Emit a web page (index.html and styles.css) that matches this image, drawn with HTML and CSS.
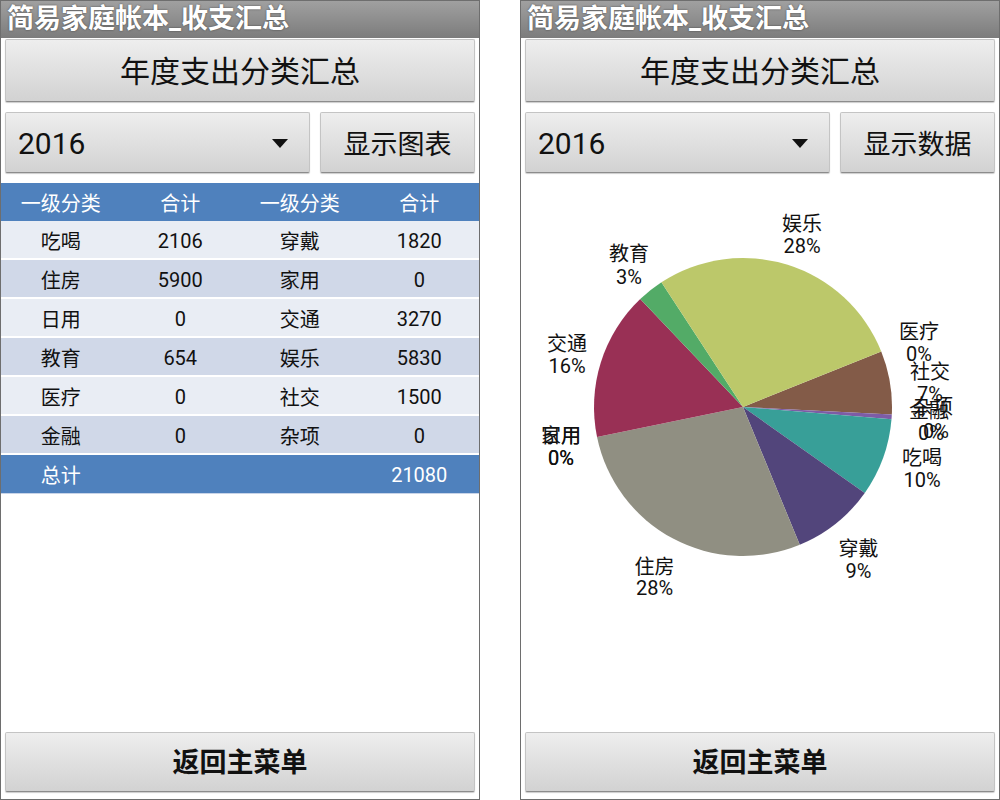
FILE: index.html
```html
<!DOCTYPE html>
<html lang="zh-CN">
<head>
<meta charset="utf-8">
<title>简易家庭帐本_收支汇总</title>
<link rel="stylesheet" href="styles.css">
</head>
<body>
<div class="page">
  <div class="screen">
    <div class="titlebar">简易家庭帐本_收支汇总</div>
    <div class="btn btn-wide">年度支出分类汇总</div>
    <div class="row2">
      <div class="btn spinner"><span>2016</span><span class="arrow"></span></div>
      <div class="btn btn-small">显示图表</div>
    </div>
    <div class="table">
      <div class="tr head"><span>一级分类</span><span>合计</span><span>一级分类</span><span>合计</span></div>
      <div class="tr light"><span>吃喝</span><span>2106</span><span>穿戴</span><span>1820</span></div>
      <div class="tr dark"><span>住房</span><span>5900</span><span>家用</span><span>0</span></div>
      <div class="tr light"><span>日用</span><span>0</span><span>交通</span><span>3270</span></div>
      <div class="tr dark"><span>教育</span><span>654</span><span>娱乐</span><span>5830</span></div>
      <div class="tr light"><span>医疗</span><span>0</span><span>社交</span><span>1500</span></div>
      <div class="tr dark"><span>金融</span><span>0</span><span>杂项</span><span>0</span></div>
      <div class="tr total"><span>总计</span><span></span><span></span><span>21080</span></div>
    </div>
    <div class="btn btn-bottom">返回主菜单</div>
  </div>

  <div class="screen">
    <div class="titlebar">简易家庭帐本_收支汇总</div>
    <div class="btn btn-wide">年度支出分类汇总</div>
    <div class="row2">
      <div class="btn spinner"><span>2016</span><span class="arrow"></span></div>
      <div class="btn btn-small">显示数据</div>
    </div>
    <div class="chart">
      <svg class="pie" width="478" height="558" viewBox="0 0 478 558" xmlns="http://www.w3.org/2000/svg">
        <path fill="#835b48" d="M222 234 L360.24 178.42 A149 149 0 0 1 370.81 241.54 Z"/>
        <path fill="#7d5ca6" d="M222 234 L370.81 241.54 A149 149 0 0 1 370.50 246.21 Z"/>
        <path fill="#389f98" d="M222 234 L370.50 246.21 A149 149 0 0 1 343.75 319.89 Z"/>
        <path fill="#52457b" d="M222 234 L343.75 319.89 A149 149 0 0 1 278.78 371.76 Z"/>
        <path fill="#908f82" d="M222 234 L278.78 371.76 A149 149 0 0 1 76.04 263.96 Z"/>
        <path fill="#993055" d="M222 234 L76.04 263.96 A149 149 0 0 1 119.25 126.10 Z"/>
        <path fill="#53ab67" d="M222 234 L119.25 126.10 A149 149 0 0 1 140.40 109.32 Z"/>
        <path fill="#bcc86a" d="M222 234 L140.40 109.32 A149 149 0 0 1 360.24 178.42 Z"/>
        <g class="lbl">
          <text x="281" y="57.5">娱乐</text><text x="281" y="80">28%</text>
          <text x="108" y="88">教育</text><text x="108" y="110.5">3%</text>
          <text x="46" y="178">交通</text><text x="46" y="200">16%</text>
          <text x="40" y="270">家用</text><text x="40" y="270">日用</text><text x="40" y="292">0%</text><text x="40" y="292">0%</text>
          <text x="133.5" y="401">住房</text><text x="133.5" y="422">28%</text>
          <text x="337.5" y="383">穿戴</text><text x="337.5" y="405">9%</text>
          <text x="401" y="292">吃喝</text><text x="401" y="314">10%</text>
          <text x="398" y="166">医疗</text><text x="398" y="188">0%</text>
          <text x="409" y="206">社交</text><text x="409" y="228">7%</text>
          <text x="408" y="245">金融</text><text x="410" y="267">0%</text>
          <text x="412" y="241">杂项</text><text x="415" y="265">0%</text>
        </g>
      </svg>
    </div>
    <div class="btn btn-bottom">返回主菜单</div>
  </div>
</div>
</body>
</html>
```

FILE: styles.css
```css
* { box-sizing: border-box; }

body {
  margin: 0;
  background: #ffffff;
  font-family: Roboto, "Noto Sans CJK SC", sans-serif;
  color: #111111;
}

.page {
  display: flex;
  gap: 40px;
  width: 1000px;
  height: 800px;
}

.screen {
  width: 480px;
  height: 800px;
  border: 1px solid #6e6e6e;
  display: flex;
  flex-direction: column;
  background: #ffffff;
  overflow: hidden;
}

.titlebar {
  height: 37px;
  flex: none;
  background: linear-gradient(#a0a0a0, #7c7c7c);
  color: #ffffff;
  font-size: 27px;
  font-weight: bold;
  line-height: 37px;
  padding-left: 6px;
  white-space: nowrap;
  text-shadow: 0 0 2px rgba(0, 0, 0, 0.55);
}

.btn {
  background: linear-gradient(#eeeeee, #d2d2d2);
  border: 1px solid #c4c4c4;
  border-bottom-color: #8c8c8c;
  border-radius: 2px;
  box-shadow: 0 1px 1px rgba(0, 0, 0, 0.2);
  display: flex;
  align-items: center;
  justify-content: center;
  color: #111111;
  white-space: nowrap;
  flex: none;
}

.btn-wide {
  margin: 1px 4px 0;
  height: 63px;
  padding-bottom: 4px;
  font-size: 30px;
}

.row2 {
  display: flex;
  gap: 10px;
  margin: 10px 4px 0;
  height: 61px;
  flex: none;
}

.spinner {
  width: 305px;
  justify-content: space-between;
  padding: 2px 21px 0 12px;
  font-size: 30px;
}

.arrow {
  width: 0;
  height: 0;
  border-left: 8px solid transparent;
  border-right: 8px solid transparent;
  border-top: 9px solid #111111;
}

.btn-small {
  flex: 1;
  font-size: 27px;
}

.table {
  margin-top: 10px;
  display: flex;
  flex-direction: column;
  font-size: 20px;
  flex: none;
}

.tr {
  display: grid;
  grid-template-columns: repeat(4, 1fr);
  align-items: center;
  text-align: center;
}

.tr.head {
  height: 38px;
  background: #4f81bd;
  color: #ffffff;
}

.tr.light,
.tr.dark {
  height: 39px;
  padding-top: 2px;
  border-bottom: 2px solid #ffffff;
}

.tr.light { background: #e9edf4; }
.tr.dark { background: #d0d8e8; }

.tr.total {
  height: 39px;
  padding-top: 1px;
  background: #4f81bd;
  color: #ffffff;
  border-bottom: 1px solid #c8d4e8;
}

.chart {
  flex: 1;
  position: relative;
}

.pie {
  display: block;
  overflow: visible;
}

.lbl text {
  font-family: Roboto, "Noto Sans CJK SC", sans-serif;
  font-size: 20px;
  fill: #111111;
  text-anchor: middle;
}

.btn-bottom {
  margin: auto 4px 7px;
  height: 60px;
  padding-bottom: 3px;
  font-size: 27px;
  font-weight: bold;
}
```
